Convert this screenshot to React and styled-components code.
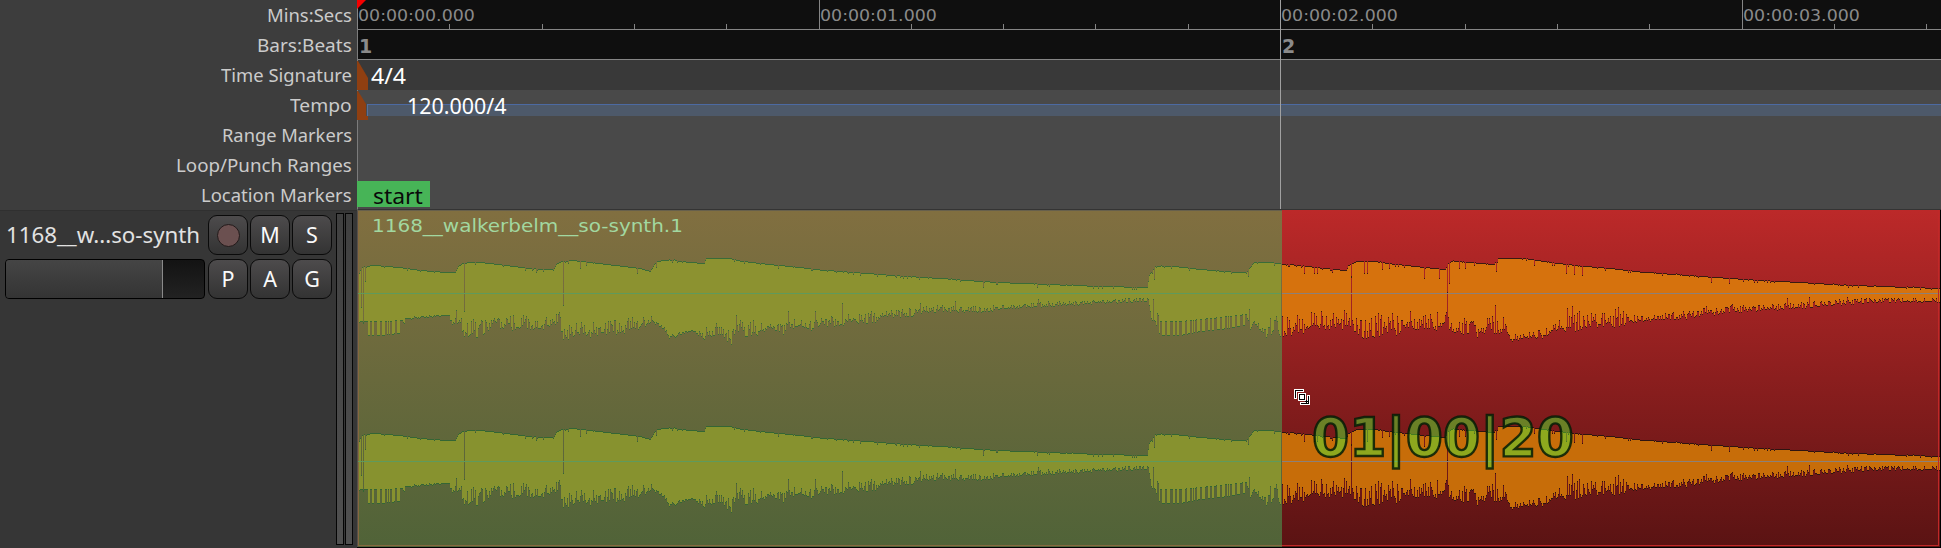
import React, { useLayoutEffect, useRef, useState } from "react";
import styled, { createGlobalStyle } from "styled-components";

const GlobalStyle = createGlobalStyle`
  html, body { margin: 0; padding: 0; background: #363636; overflow: hidden; }
  * { box-sizing: border-box; }
`;

const UI = `"Noto Sans", "Open Sans", sans-serif`;
const MONO = `"DejaVu Sans", sans-serif`;

const Editor = styled.div`
  display: grid;
  grid-template-columns: 357px 1584px;
  grid-template-rows: 210px 338px;
  width: 1941px;
  height: 548px;
  font-family: ${UI};
  overflow: hidden;
`;

const FitBox = styled.span`
  display: inline-block;
  white-space: nowrap;
  width: ${(p) => p.$w}px;
`;
const FitInner = styled.span`
  display: inline-block;
  transform-origin: 0 50%;
`;

/* Text squeezed or stretched horizontally to a fixed width */
function Fit({ w, children }) {
  const ref = useRef(null);
  const [scale, setScale] = useState(1);
  useLayoutEffect(() => {
    setScale(w / ref.current.offsetWidth);
  }, [w, children]);
  return (
    <FitBox $w={w}>
      <FitInner ref={ref} style={{ transform: `scaleX(${scale})` }}>{children}</FitInner>
    </FitBox>
  );
}

/* ---------- ruler labels ---------- */
const RulerLabels = styled.div`
  display: flex;
  flex-direction: column;
  background: #3d3d3d;
`;
const RulerLabel = styled.div`
  height: 30px;
  padding-right: 5px;
  display: flex;
  justify-content: flex-end;
  font-size: 18px;
  line-height: 30px;
  color: #cbcbcb;
`;

/* ---------- rulers ---------- */
const Rulers = styled.div`
  position: relative;
  display: flex;
  flex-direction: column;
  border-left: 1px solid #7c7c7c;
  border-bottom: 1px solid #343434;
  background: #494949;
`;
const Lane = styled.div`
  position: relative;
  height: ${(p) => p.$h || 30}px;
  flex: none;
  display: flex;
  background: ${(p) => p.$bg || "#494949"};
  border-bottom: ${(p) => (p.$line ? "1px solid #858585" : "none")};
`;
const SecondCell = styled.div`
  flex: none;
  position: relative;
  width: 461.5px;
  display: flex;
  align-items: flex-end;
  margin-left: ${(p) => (p.$first ? -1 : 0)}px;
`;
const TickCell = styled.i`
  width: 92.3px;
  height: ${(p) => (p.$major ? 29 : 5)}px;
  border-left: 1px solid #858585;
`;
const TimeCode = styled.span`
  position: absolute;
  left: 1px;
  top: 0;
  font: 16.5px/31px ${MONO};
  color: #8a8a8a;
`;
const BarNumber = styled.span`
  flex: none;
  width: 923px;
  padding-left: 1px;
  font: bold 19px/32px ${MONO};
  color: #8a8a8a;
`;
const MarkerShape = styled.svg`
  flex: none;
  display: block;
  width: 11px;
  height: 30px;
  margin-left: -1px;
`;
const MarkerText = styled.span`
  position: relative;
  margin-left: ${(p) => p.$gap}px;
  font-size: 22.5px;
  line-height: 31px;
  color: #fff;
`;
const TempoBar = styled.div`
  position: absolute;
  left: 9px;
  right: 0;
  top: 14px;
  height: 12px;
  background: #4d596a;
  border-top: 1px solid #4c6aa2;
  border-left: 1px solid #56709a;
`;
const StartFlag = styled.div`
  height: 26px;
  width: 73px;
  margin: 1px 0 0 -1px;
  padding-left: 16px;
  background: #47b457;
  color: #0a0a0a;
  font-size: 22px;
  line-height: 29px;
`;
const Playhead = styled.svg`
  position: absolute;
  left: -1px;
  top: 0;
  z-index: 2;
`;
const BarLine = styled.div`
  position: absolute;
  left: 922px;
  top: 0;
  width: 1px;
  height: 209px;
  background: #a0a0a0;
`;

/* ---------- track header ---------- */
const TrackHeader = styled.div`
  display: flex;
  background: #363636;
  border-top: 1px solid #303030;
`;
const Controls = styled.div`
  flex: none;
  width: 336px;
  padding: 4px 4px 0 5px;
  display: grid;
  grid-template-columns: 200px 40px 40px 40px;
  grid-template-rows: 40px 40px;
  column-gap: 2px;
  row-gap: 4px;
`;
const TrackName = styled.div`
  padding-left: 1px;
  font-size: 21px;
  line-height: 41px;
  color: #e2e2e2;
`;
const TrackButton = styled.button`
  display: flex;
  align-items: center;
  justify-content: center;
  padding: 0;
  margin-left: 1px;
  width: 40px;
  height: 40px;
  border: 1px solid #0a0a0a;
  border-radius: 9px;
  background: linear-gradient(#4d4b4c, #333);
  font: 21.5px/38px ${UI};
  color: #fafafa;
`;
const RecordDot = styled.i`
  width: 23px;
  height: 23px;
  border-radius: 50%;
  border: 1px solid #221a1a;
  background: #6b5050;
`;
const Fader = styled.div`
  height: 40px;
  border: 1px solid #000;
  border-radius: 4px;
  background: linear-gradient(#131313, #222);
  overflow: hidden;
`;
const FaderFill = styled.div`
  width: 157px;
  height: 100%;
  border-right: 1px solid #8a8a8a;
  background: linear-gradient(#454545, #343434);
`;
const Meter = styled.div`
  width: 8px;
  height: 332px;
  margin: 2px 1px 0 0;
  border: 1px solid #050505;
  background: linear-gradient(#404040, #505050);
`;

/* ---------- track canvas ---------- */
const TrackCanvas = styled.div`
  position: relative;
  display: flex;
  background: #000;
  padding: 0 1px 1px 0;
`;
const Region = styled.div`
  position: relative;
  flex: none;
  width: ${(p) => p.$w}px;
  height: 337px;
  overflow: hidden;
  background: ${(p) => p.$bg};
  border-left: ${(p) => p.$left || "none"};
  border-top: ${(p) => p.$top || "none"};
`;
const RegionFrame = styled.div`
  position: absolute;
  left: 0;
  right: ${(p) => p.$right}px;
  top: -1px;
  bottom: 1px;
  border: 1px solid ${(p) => p.$c};
  border-top: 0;
  ${(p) => p.$open}: 0;
`;
const Wave = styled.svg`
  position: absolute;
  left: 0;
  top: ${(p) => p.$top}px;
  display: block;
`;
const RegionName = styled.span`
  position: absolute;
  left: 14px;
  top: 0;
  font: 18.5px/30px ${MONO};
  color: #a2d8a0;
`;
const DragReadout = styled.div`
  position: absolute;
  left: 955px;
  top: 197px;
  font: bold 53.4px/62px ${MONO};
  white-space: nowrap;
  color: rgba(88, 222, 50, 0.52);
`;
const ReadoutOutline = styled.span`
  position: absolute;
  left: 0;
  top: 0;
  color: transparent;
  -webkit-text-stroke: ${(p) => p.$w}px ${(p) => p.$c};
`;
const Cursor = styled.svg`
  position: absolute;
  left: 937px;
  top: 179px;
`;

/* ---------- waveform data: [x, y] of the upper edge, [x, deep, shallow] of the lower ---------- */
const UPPER = [
  [359, 273], [361, 267], [365, 266], [373, 265], [388, 266], [403, 267.5], [420, 270], [440, 271.5], [455, 272],
  [457, 267], [462, 263], [470, 262], [485, 262.5], [510, 265.5], [530, 268], [553, 269.5], [556, 264], [560, 261.5],
  [572, 260], [590, 262], [615, 265], [640, 268], [650, 271], [656, 261], [670, 259.5], [690, 262], [704, 263],
  [706, 257.5], [728, 257.5], [740, 260.5], [760, 263], [780, 265], [800, 267], [820, 269.5], [860, 272.5],
  [900, 275.5], [940, 278], [980, 281], [1020, 283], [1060, 284.5], [1100, 286], [1147, 287], [1149, 275], [1155, 265.5],
  [1170, 265.5], [1200, 269], [1225, 271], [1246, 272.5], [1248, 269], [1254, 262], [1270, 262], [1281, 263.5],
  [1300, 265], [1320, 267.5], [1340, 269.5], [1346, 270], [1348, 265], [1354, 262], [1358, 260.5], [1370, 260.5],
  [1392, 263.5], [1420, 266.5], [1445, 269], [1447, 264], [1452, 260.5], [1470, 262], [1494, 264], [1498, 257.5],
  [1518, 257.5], [1532, 259], [1550, 262], [1580, 265.5], [1610, 268], [1640, 271.5], [1700, 276], [1760, 280],
  [1800, 282], [1840, 284.5], [1880, 286], [1940, 288],
];
const LOWER = [
  [359, 322, 321], [364, 322, 321], [365, 335, 321], [383, 335, 321], [403, 332, 320], [405, 319, 317],
  [420, 318, 316], [449, 315, 314], [451, 325, 317], [457, 325, 316], [461, 325, 318], [463, 341, 322], [470, 336, 320],
  [483, 341, 318], [486, 332, 322], [498, 329, 315], [510, 330, 315], [530, 332, 314], [545, 329, 315], [560, 326, 312],
  [562, 340, 325], [580, 338, 322], [600, 337, 321], [620, 334, 320], [635, 331, 316], [652, 323, 316], [662, 328, 324],
  [670, 340, 334], [680, 334, 332], [692, 330, 330], [698, 335, 332], [706, 341, 326], [722, 338, 322], [731, 345, 328],
  [737, 332, 320], [745, 337, 319], [758, 337, 320], [770, 328, 323], [783, 334, 324], [790, 329, 320], [802, 327, 317],
  [812, 332, 322], [820, 325, 317], [838, 329, 316], [846, 324, 314], [870, 324, 312], [885, 317, 311], [905, 318, 309],
  [920, 314, 306], [940, 312, 305], [975, 312, 306], [985, 313, 307], [1000, 309, 304], [1040, 307, 302], [1060, 306, 301],
  [1100, 303, 300], [1146, 302, 297], [1148, 302, 298], [1151, 318, 310], [1158, 331, 312], [1160, 335, 321],
  [1180, 335, 321], [1200, 331, 319], [1220, 329, 317], [1246, 325, 314], [1249, 331, 315], [1254, 322, 321],
  [1262, 337, 321], [1280, 337, 314], [1296, 334, 313], [1315, 331, 312], [1345, 329, 310], [1355, 332, 318],
  [1362, 338, 314], [1392, 338, 313], [1405, 329, 322], [1430, 331, 314], [1446, 329, 312], [1455, 332, 326],
  [1465, 340, 316], [1490, 335, 316], [1503, 332, 320], [1512, 342, 334], [1525, 338, 332], [1545, 338, 328],
  [1552, 330, 324], [1570, 333, 313], [1585, 332, 311], [1600, 328, 313], [1622, 326, 311], [1645, 321, 317],
  [1665, 321, 313], [1684, 320, 311], [1700, 316, 307], [1733, 313, 304], [1760, 311, 305], [1800, 308, 302],
  [1840, 305, 299], [1860, 303, 298], [1940, 302, 298],
];
/* isolated long notches: x -> y where the column starts (upper) or ends (lower) */
const NOTCH_UP = {
  361: 307, 363: 322, 365: 281, 464: 311, 563: 305, 580: 268, 586: 265, 536: 272, 637: 273, 656: 267,
  1154: 279, 1248: 276, 1304: 273, 1314: 273, 1317: 273, 1332: 272, 1351: 276, 1364: 273, 1367: 273, 1382: 269,
  1389: 268, 1424: 278, 1439: 278, 1447: 292, 1449: 283, 1459: 268, 1465: 268, 1496: 271, 1534: 265, 1566: 273,
  1574: 274, 1582: 275, 1711: 282, 1729: 283, 1848: 287, 778: 268, 877: 276, 983: 287, 1037: 287, 1132: 289,
};
const NOTCH_DOWN = {
  456: 310, 559: 312, 736: 315, 788: 311, 815: 311, 842: 303, 920: 303, 955: 301, 1038: 299, 1153: 299, 1249: 309,
  1351: 276, 1344: 310, 1410: 311, 1495: 305, 1503: 317, 1567: 308, 1572: 306, 1577: 313, 1615: 309, 1618: 307,
  1623: 311, 1787: 298, 1809: 297, 1847: 297,
};

const at = (table, x, k) => {
  let i = 1;
  while (i < table.length - 1 && table[i][0] < x) i++;
  const a = table[i - 1];
  const b = table[i];
  const t = Math.max(0, Math.min(1, (x - a[0]) / (b[0] - a[0])));
  return a[k] + (b[k] - a[k]) * t;
};

let seed = 20417;
const rnd = () => {
  seed = (seed * 1664525 + 1013904223) >>> 0;
  return seed / 4294967296;
};

const COLUMNS = [];
for (let x = 359; x < 1940; x++) {
  let top = Math.round(at(UPPER, x, 1) + (rnd() < 0.12 ? rnd() * 3.4 - 0.8 : 0));
  const deep = at(LOWER, x, 1);
  const shallow = at(LOWER, x, 2);
  const regular = (x > 364 && x < 403) || (x > 1158 && x < 1246);
  let f;
  if (regular) f = x % 5 < 2 || x % 7 === 3 ? 1 : 0;
  else f = rnd() < 0.42 ? rnd() * 0.35 : 0.25 + rnd() * 0.8;
  let bot = Math.round(deep + (shallow - deep) * f);
  if (NOTCH_UP[x]) top = NOTCH_UP[x];
  if (NOTCH_DOWN[x]) bot = NOTCH_DOWN[x];
  if (x === 1351) bot = top + 1;
  if (x === 1447) bot = top + 1;
  if (bot <= top) bot = top + 1;
  COLUMNS.push([x, top - 210, bot - 210]);
}

function Waveform({ from, to, top, fill, edge, axis }) {
  const cols = COLUMNS.filter((c) => c[0] >= from && c[0] < to);
  const body = cols.map(([x, a, b]) => `M${x - from} ${a}h1V${b}h-1z`).join("");
  const edges = cols.map(([x, a, b]) => `M${x - from} ${a}h1v1h-1zM${x - from} ${b}h1v1h-1z`).join("");
  return (
    <Wave $top={top} width={to - from} height="170" shapeRendering="crispEdges">
      <path d={body} fill={fill} />
      <path d={edges} fill={edge} />
      <rect x="0" y="83" width={to - from} height="1" fill={axis} />
    </Wave>
  );
}

const LABELS = [
  ["Mins:Secs", 85], ["Bars:Beats", 95], ["Time Signature", 131], ["Tempo", 62],
  ["Range Markers", 130], ["Loop/Punch Ranges", 176], ["Location Markers", 151],
];

export default function App() {
  return (
    <Editor>
      <GlobalStyle />
      <RulerLabels>
        {LABELS.map(([t, w]) => (
          <RulerLabel key={t}><Fit w={w}>{t}</Fit></RulerLabel>
        ))}
      </RulerLabels>

      <Rulers>
        <Lane $bg="#0f0f0f" $line>
          {[0, 1, 2, 3].map((s) => (
            <SecondCell key={s} $first={s === 0}>
              {[0, 1, 2, 3, 4].map((t) => <TickCell key={t} $major={t === 0} />)}
              <TimeCode><Fit w={117}>{`00:00:0${s}.000`}</Fit></TimeCode>
            </SecondCell>
          ))}
        </Lane>
        <Lane $bg="#0f0f0f" $line>
          <BarNumber>1</BarNumber>
          <BarNumber>2</BarNumber>
        </Lane>
        <Lane $bg="#393939">
          <MarkerShape viewBox="0 0 11 30"><path d="M0 1L1 1L11 18V30H0z" fill="#8f3f11" /></MarkerShape>
          <MarkerText $gap={3}><Fit w={35}>4/4</Fit></MarkerText>
        </Lane>
        <Lane>
          <TempoBar />
          <MarkerShape viewBox="0 0 11 30"><path d="M0 1L1 1L9 14V26H11V30H0z" fill="#8f3f11" /></MarkerShape>
          <MarkerText $gap={39}><Fit w={100}>120.000/4</Fit></MarkerText>
        </Lane>
        <Lane />
        <Lane />
        <Lane $h={29}>
          <StartFlag><Fit w={50}>start</Fit></StartFlag>
        </Lane>
        <BarLine />
        <Playhead width="9" height="9"><path d="M0 0H9L0 9z" fill="#f50000" /></Playhead>
      </Rulers>

      <TrackHeader>
        <Controls>
          <TrackName><Fit w={194}>1168__w...so-synth</Fit></TrackName>
          <TrackButton><RecordDot /></TrackButton>
          <TrackButton>M</TrackButton>
          <TrackButton>S</TrackButton>
          <Fader><FaderFill /></Fader>
          <TrackButton>P</TrackButton>
          <TrackButton>A</TrackButton>
          <TrackButton>G</TrackButton>
        </Controls>
        <Meter />
        <Meter />
      </TrackHeader>

      <TrackCanvas>
        <Region $w={925} $bg="linear-gradient(#816f40, #506338)" $left="1px solid #55504a" $top="1px solid #67604c">
          <RegionFrame $right={0} $c="#85683f" $open="border-right" />
          <Waveform from={358} to={1281} top={-1} fill="#8c9230" edge="#3a6c38" axis="#5f9a5c" />
          <Waveform from={358} to={1281} top={167} fill="#87922f" edge="#346634" axis="#5f9a5c" />
          <RegionName><Fit w={311}>1168__walkerbelm__so-synth.1</Fit></RegionName>
        </Region>
        <Region $w={658} $bg="linear-gradient(#bc2929, #5a1313)">
          <Waveform from={1282} to={1940} top={0} fill="#d6720d" edge="#3a1a12" axis="#8c8078" />
          <Waveform from={1282} to={1940} top={168} fill="#c76d09" edge="#2e1410" axis="#8c8078" />
          <RegionFrame $right={1} $c="#c02828" $open="border-left" />
        </Region>
        <Cursor width="17" height="17" shapeRendering="crispEdges" fill="none">
          <path d="M1.5 10V1.5H10M14.5 6V14.5H6" stroke="#fff" strokeWidth="3" />
          <path d="M1.5 9V1.5H9M14.5 7V14.5H7" stroke="#000" strokeWidth="1" />
          <rect x="4" y="4" width="8" height="8" fill="#fff" />
          <rect x="5.5" y="5.5" width="5" height="5" stroke="#000" />
          <path d="M11 12.5H14M12.5 11V14" stroke="#000" />
        </Cursor>
        <DragReadout>
          <ReadoutOutline aria-hidden="true" $w={2.4} $c="rgba(4, 28, 6, 0.85)">01|00|20</ReadoutOutline>
          01|00|20
        </DragReadout>
      </TrackCanvas>
    </Editor>
  );
}
